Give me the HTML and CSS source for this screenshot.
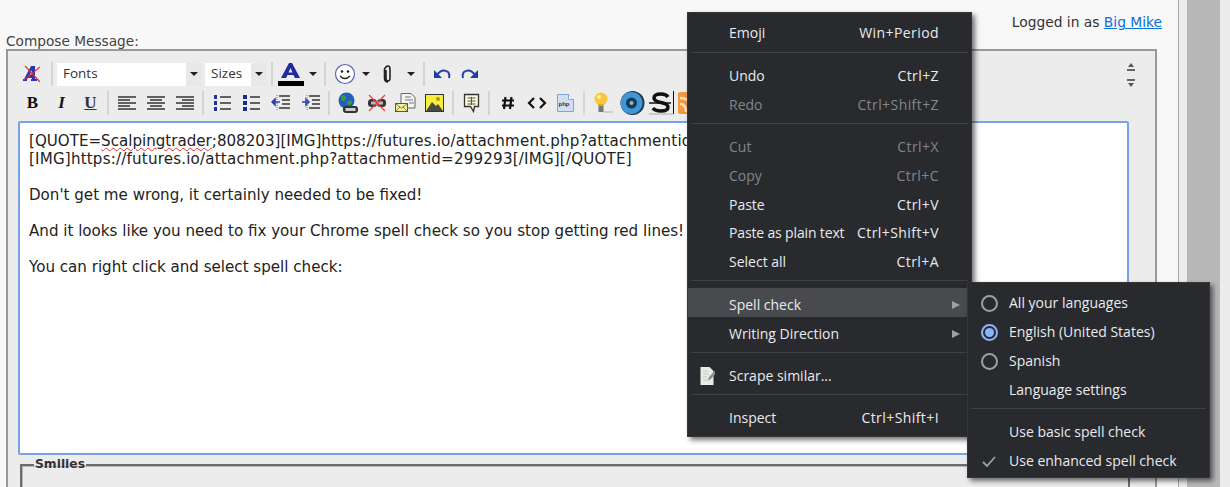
FILE: index.html
```html
<!DOCTYPE html>
<html lang="en">
<head>
<meta charset="utf-8">
<title>Compose Message</title>
<link rel="stylesheet" href="styles.css">
</head>
<body>
<div class="window">
  <main class="page">
    <div class="logged">Logged in as <a href="#">Big Mike</a></div>
    <label class="compose-label">Compose Message:</label>
    <section class="editor">
      <div class="tool-area">
        <div class="toolbars">
          <div class="tb-row tb-row-top">
            <span class="btn btn-first"><svg width="20" height="20" viewBox="0 0 20 20"><path d="M1 17 9 2h4v15h-3v-3H6l-2 3z M7.500 11H10V6z" fill="#2a35b0" fill-rule="evenodd"/><path d="M1 16h4M9 16h6" stroke="#2a35b0" stroke-width="2"/><path d="M3 2 18 18M18 3 2 16" stroke="#e0303a" stroke-width="1.100"/></svg></span>
            <i class="sep sep-first"></i>
            <span class="select select-font"><span class="select-text">Fonts</span><span class="select-arrow"><b class="caret"></b></span></span>
            <span class="select select-size"><span class="select-text">Sizes</span><span class="select-arrow"><b class="caret"></b></span></span>
            <i class="sep sep-color"></i>
            <span class="color-btn"><svg width="26" height="18" viewBox="0 0 26 18"><path d="M3 16 11 1h3l8 15h-5l-1.500-3h-6L8 16z M10.500 10.500h4L12.500 6z" fill="#1f2a9c" fill-rule="evenodd"/></svg><b class="color-bar"></b></span>
            <b class="caret caret-color"></b>
            <i class="sep sep-a"></i>
            <span class="btn btn-smile"><svg width="22" height="22" viewBox="0 0 22 22"><circle cx="11" cy="11" r="9.500" fill="#fff" stroke="#5a64b8" stroke-width="1.200"/><circle cx="8" cy="8.500" r="1.300" fill="#222"/><circle cx="14" cy="8.500" r="1.300" fill="#222"/><path d="M6 13q5 5 10 0" fill="none" stroke="#222" stroke-width="1.300"/></svg></span>
            <b class="caret caret-smile"></b>
            <span class="btn btn-clip"><svg width="10" height="18" viewBox="0 0 10 18"><path d="M3 5v8q0 3 2 3t2-3V4Q7 1 5 1T1.500 4v9q0 4 3.500 4" fill="none" stroke="#222" stroke-width="1.600"/></svg></span>
            <b class="caret caret-clip"></b>
            <i class="sep sep-b"></i>
            <span class="btn btn-undo"><svg width="17" height="13" viewBox="0 0 17 13"><path d="M3 7Q8 0 14 4q2 2 1 6" fill="none" stroke="#1f3fa8" stroke-width="2"/><path d="M0 2v8h8z" fill="#1f3fa8"/></svg></span>
            <span class="btn btn-redo"><svg width="17" height="13" viewBox="0 0 17 13"><path d="M14 7Q9 0 3 4q-2 2-1 6" fill="none" stroke="#1f3fa8" stroke-width="2"/><path d="M17 2v8H9z" fill="#1f3fa8"/></svg></span>
          </div>
          <div class="tb-row tb-row-bottom">
            <span class="btn fmt fmt-b">B</span>
            <span class="btn fmt fmt-i">I</span>
            <span class="btn fmt fmt-u">U</span>
            <i class="sep sep-short"></i>
            <span class="btn"><svg width="18" height="14" viewBox="0 0 18 14"><path d="M0 1h18M0 4h12M0 7h18M0 10h12M0 13h18" stroke="#333" stroke-width="1.400"/></svg></span>
            <span class="btn"><svg width="18" height="14" viewBox="0 0 18 14"><path d="M0 1h18M3 4h12M0 7h18M3 10h12M0 13h18" stroke="#333" stroke-width="1.400"/></svg></span>
            <span class="btn"><svg width="18" height="14" viewBox="0 0 18 14"><path d="M0 1h18M6 4h12M0 7h18M6 10h12M0 13h18" stroke="#333" stroke-width="1.400"/></svg></span>
            <i class="sep"></i>
            <span class="btn"><svg width="18" height="18" viewBox="0 0 18 18"><path d="M1 1h3v4H1zM1 7h3v4H1zM1 13h3v4H1z" fill="#2430a0"/><path d="M7 3h11M7 9h11M7 15h11" stroke="#333" stroke-width="1.500"/></svg></span>
            <span class="btn"><svg width="18" height="18" viewBox="0 0 18 18"><path d="M1 1h4v4H1zM1 7h4v4H1zM1 13h4v4H1z" fill="#1a2a94"/><path d="M8 3h10M8 9h10M8 15h10" stroke="#333" stroke-width="1.500"/></svg></span>
            <span class="btn btn-nudge"><svg width="20" height="18" viewBox="0 0 20 18"><path d="M8 2h11M11 6h8M11 10h8M8 14h11" stroke="#333" stroke-width="1.500"/><path d="M1 8h8M1 8l3-3v6z" stroke="#2a3fb0" stroke-width="1.500" fill="#2a3fb0"/><path d="M6 16V1" stroke="#777" stroke-width="1" stroke-dasharray="1 1"/></svg></span>
            <span class="btn btn-nudge"><svg width="20" height="18" viewBox="0 0 20 18"><path d="M8 2h11M11 6h8M11 10h8M8 14h11" stroke="#333" stroke-width="1.500"/><path d="M1 8h7M8 8 5 5v6z" stroke="#2a3fb0" stroke-width="1.500" fill="#2a3fb0"/><path d="M6 16V1" stroke="#777" stroke-width="1" stroke-dasharray="1 1"/></svg></span>
            <i class="sep"></i>
            <span class="btn"><svg width="22" height="22" viewBox="0 0 22 22"><circle cx="9.500" cy="8.500" r="8" fill="#1f5fc0"/><path d="M4 4q4-2 5 1t-3 4q-2 0-2-5zM10 10l4-2 1 3-3 3z" fill="#3f9a3c"/><rect x="6" y="14" width="15" height="7" rx="3" fill="#333"/><rect x="8.500" y="16" width="10" height="3" fill="#cfcfcf"/></svg></span>
            <span class="btn"><svg width="20" height="18" viewBox="0 0 20 18"><rect x="1" y="5" width="9" height="8" rx="3.500" fill="#333"/><rect x="10" y="5" width="9" height="8" rx="3.500" fill="#333"/><rect x="4" y="7.500" width="12" height="3" fill="#b9b9b9"/><path d="M2 1l16 16M18 1 2 17" stroke="#ec3c3c" stroke-width="1.200"/></svg></span>
            <span class="btn"><svg width="21" height="20" viewBox="0 0 21 20"><path d="M6 .5h10l4 4V15H6z" fill="#f4f4f4" stroke="#666"/><path d="M10 4h6M10 7h8M14 10h5" stroke="#777"/><rect x=".5" y="10.500" width="12" height="8" fill="#f6ef9c" stroke="#555"/><path d="M1 11l5.500 4 5.500-4M1 18l4-4M12 18l-4-4" fill="none" stroke="#7a8a3a"/></svg></span>
            <span class="btn"><svg width="19" height="18" viewBox="0 0 19 18"><rect x=".5" y=".5" width="18" height="17" fill="#f6ee3a" stroke="#333"/><circle cx="13" cy="5" r="2" fill="#a89a2a"/><path d="M1 17 7 8l4 4 2-2 5 7z" fill="#4a4a44"/></svg></span>
            <i class="sep"></i>
            <span class="btn"><svg width="17" height="20" viewBox="0 0 17 20"><path d="M1.500 1.500h14v12h-4l-1 5-3-5h-6z" fill="#fbfbd8" stroke="#333" stroke-width="1.300"/><path d="M4.500 5h8M4.500 8h8M4.500 11h8M8.500 4v8" stroke="#555"/></svg></span>
            <i class="sep sep-short"></i>
            <span class="btn"><svg width="14" height="14" viewBox="0 0 14 14"><path d="M4.500 1 3 13M10.500 1 9 13M1 4.500h12M1 9.500h12" stroke="#111" stroke-width="2.200"/></svg></span>
            <span class="btn"><svg width="20" height="12" viewBox="0 0 20 12"><path d="M7 1 2 6l5 5M13 1l5 5-5 5" fill="none" stroke="#111" stroke-width="2.200"/></svg></span>
            <span class="btn"><svg width="17" height="18" viewBox="0 0 17 18"><path d="M.5.500h11l5 5v12H.5z" fill="#cfe0f5" stroke="#7ea6d6"/><path d="M11.500.5v5h5" fill="#fff" stroke="#7ea6d6"/><text x="1.500" y="11.500" class="php">php</text></svg></span>
            <i class="sep"></i>
            <span class="btn"><svg width="22" height="22" viewBox="0 0 22 22"><circle cx="9" cy="7" r="6.500" fill="#f8c83a"/><circle cx="7" cy="5" r="2" fill="#fdeea0"/><path d="M6 12h6v2H6z" fill="#e5a91f"/><rect x="6.500" y="14" width="5" height="6" fill="#777"/><path d="M12 20h9" stroke="#cfcfcf" stroke-width="2"/></svg></span>
            <span class="btn"><svg width="26" height="26" viewBox="0 0 26 26"><circle cx="13.500" cy="13" r="12" fill="#24344a"/><circle cx="12.500" cy="13" r="11" fill="#3f97d8"/><circle cx="12.500" cy="13" r="5.500" fill="#163a5a"/><circle cx="12.500" cy="13" r="2" fill="#8fb9cc"/></svg></span>
            <span class="btn"><svg width="26" height="24" viewBox="0 0 26 24"><path d="M20 6q-2-3-7-3-7 0-7 4 0 3 7 4.500t7 4.500q0 4-7 4-6 0-8-3" fill="none" stroke="#111" stroke-width="3.500"/><path d="M1 12h22" stroke="#111" stroke-width="1.500"/><path d="M1 23h24" stroke="#aaa"/><path d="M25.500 0v23" stroke="#111"/></svg></span>
            <span class="btn btn-rss"><svg width="20" height="22" viewBox="0 0 20 22"><rect width="20" height="22" rx="2" fill="#f39a3c"/><path d="M2 6q12 0 12 14M2 12q6 0 6 8" fill="none" stroke="#fde3c4" stroke-width="2.500"/></svg></span>
          </div>
        </div>
        <div class="resize">
          <svg width="8" height="9" viewBox="0 0 8 9"><path d="M4 0 7 4H1z" fill="#555"/><path d="M0 6h8v2H0z" fill="#666"/></svg>
          <svg width="8" height="9" viewBox="0 0 8 9"><path d="M0 1h8v2H0z" fill="#666"/><path d="M1 5h6L4 9z" fill="#555"/></svg>
        </div>
      </div>
      <div class="textbox">
        <p class="line">[QUOTE=<span class="misspelt">Scalpingtrader</span>;808203][IMG]<span class="url">https://futures.io/attachment.php?attachmentid=299292[/IMG]</span></p>
        <p class="line para url">[IMG]https://futures.io/attachment.php?attachmentid=299293[/IMG][/QUOTE]</p>
        <p class="line para">Don't get me wrong, it certainly needed to be fixed!</p>
        <p class="line para">And it looks like you need to fix your Chrome spell check so you stop getting red lines!</p>
        <p class="line">You can right click and select spell check:</p>
      </div>
      <fieldset class="smilies"><legend>Smilies</legend></fieldset>
    </section>
  </main>
  <div class="gutter"><div class="gutter-bar"></div></div>

  <nav class="menu menu-main">
    <div class="mi mi-lead"><span>Emoji</span><span class="short">Win+Period</span></div>
    <hr class="msep">
    <div class="mi"><span>Undo</span><span class="short">Ctrl+Z</span></div>
    <div class="mi off"><span>Redo</span><span class="short">Ctrl+Shift+Z</span></div>
    <hr class="msep">
    <div class="mi off"><span>Cut</span><span class="short">Ctrl+X</span></div>
    <div class="mi off"><span>Copy</span><span class="short">Ctrl+C</span></div>
    <div class="mi mi-tight"><span>Paste</span><span class="short">Ctrl+V</span></div>
    <div class="mi"><span class="plain">Paste as plain text</span><span class="short">Ctrl+Shift+V</span></div>
    <div class="mi"><span>Select all</span><span class="short">Ctrl+A</span></div>
    <hr class="msep msep-wide">
    <div class="mi hot"><span>Spell check</span><b class="tri"></b></div>
    <div class="mi"><span>Writing Direction</span><b class="tri"></b></div>
    <hr class="msep">
    <div class="mi"><svg class="mi-icon" width="15" height="20" viewBox="0 0 15 20"><path d="M.5 1h9l4 4v14H.5z" fill="#e6ece6"/><path d="M3 5h5M3 8h6M3 11h4M3 14h7" stroke="#c2cac2"/><path d="M14.500 5 9 11l-1 3 3-1 5-6z" fill="#8a8f8a"/></svg><span>Scrape similar...</span></div>
    <hr class="msep">
    <div class="mi"><span>Inspect</span><span class="short">Ctrl+Shift+I</span></div>
  </nav>

  <nav class="menu menu-sub">
    <div class="mi"><i class="radio"></i><span>All your languages</span></div>
    <div class="mi"><i class="radio on"></i><span>English (United States)</span></div>
    <div class="mi"><i class="radio"></i><span>Spanish</span></div>
    <div class="mi"><span>Language settings</span></div>
    <hr class="msep">
    <div class="mi"><span>Use basic spell check</span></div>
    <div class="mi"><svg class="mi-check" width="14" height="11" viewBox="0 0 14 11"><path d="M1 6l4 4 8-9" fill="none" stroke="#9aa0a6" stroke-width="1.800"/></svg><span>Use enhanced spell check</span></div>
  </nav>
</div>
</body>
</html>
```
FILE: styles.css
```css
* { box-sizing: border-box; }
html, body { margin: 0; height: 100%; }
body { overflow: hidden; background: #f8f8f8; font-family: "DejaVu Sans", Verdana, sans-serif; color: #333; }
.window { position: relative; display: flex; width: 1230px; height: 487px; overflow: hidden; }

.page { width: 1179px; height: 487px; flex: none; padding: 13px 16px 0 6px; border-right: 1px solid #a8a8a8; background: #f8f8f8; }
.gutter { flex: 1; background: #ececec; padding-left: 8px; }
.gutter-bar { width: 33px; height: 100%; background: #b8b8b8; }

.logged { text-align: right; font-size: 13.800px; line-height: 18px; color: #333; }
.logged a { color: #0b6fd8; }
.compose-label { display: block; margin-top: 2px; font-size: 13.700px; line-height: 16px; color: #444; }

.editor { width: 1151px; height: 480px; margin: 0; border: 2px solid #999; background: #ececec; padding: 11px 0 0 10px; }
.tool-area { display: flex; padding-right: 16px; height: 59px; }
.toolbars { flex: 1; min-width: 0; }
.tb-row { display: flex; align-items: center; }
.tb-row-top { height: 24px; }
.tb-row-bottom { height: 24px; margin-top: 5px; }

.btn { flex: none; width: 29px; height: 24px; display: flex; align-items: center; justify-content: center; }
.btn-first { width: 28px; }
.btn-smile { width: 24px; margin-left: 7px; }
.btn-clip { width: 22px; margin-left: 7px; }
.btn-undo { width: 27px; margin-left: 4px; }
.btn-redo { width: 27px; }
.btn-nudge { margin-left: 1px; }
.btn-rss { justify-content: flex-start; margin-left: 3px; }

.sep { flex: none; width: 2px; height: 24px; margin: 0 3px; background: #d4d4d0; }
.sep-short { margin: 0 3px 0 2px; }
.sep-first { margin: 0 4px 0 5px; }
.sep-color { margin: 0 5px 0 4px; }
.sep-a { margin: 0 0 0 7px; }
.sep-b { margin: 0 0 0 8px; }

.select { flex: none; display: flex; height: 23px; background: #fff; margin-right: 3px; }
.select-font { width: 145px; }
.select-size { width: 62px; margin-right: 0; }
.select-text { flex: 1; padding-left: 6px; font: 13.500px/20px "Open Sans", sans-serif; color: #333; }
.select-arrow { width: 16px; background: #e8e8e8; display: flex; align-items: center; justify-content: center; }
.caret { display: block; flex: none; width: 0; height: 0; border-left: 4px solid transparent; border-right: 4px solid transparent; border-top: 4px solid #222; }
.color-btn { flex: none; width: 26px; height: 24px; display: flex; flex-direction: column; align-items: center; }
.color-bar { display: block; width: 26px; height: 5px; background: #000; margin-top: 1px; }
.caret-color { margin-left: 5px; }
.caret-smile { margin-left: 5px; }
.caret-clip { margin-left: 8px; }

.fmt { font-family: "Liberation Serif", serif; font-weight: 700; font-size: 17px; color: #111; }
.fmt-i { font-style: italic; }
.fmt-u { text-decoration: underline; color: #333; }
.php { font: 700 6px "Liberation Sans", sans-serif; fill: #334; }

.resize { width: 16px; padding-top: 1px; display: flex; flex-direction: column; align-items: center; gap: 6px; height: 40px; }

.textbox { width: 1111px; height: 334px; border: 2px solid #7aa3e6; border-radius: 2px; background: #fff; padding: 9px 9px; font-size: 15.100px; line-height: 18px; color: #222; overflow: hidden; }
.line { margin: 0; white-space: nowrap; }
.para { margin-bottom: 18px; }
.url { letter-spacing: .19px; }
.misspelt { text-decoration: underline wavy #e03030 1px; text-underline-offset: 1px; }

.smilies { width: 1110px; height: 60px; margin: 2px 0 0 2px; padding: 0 0 0 12px; border: 2px solid #6c6c6c; box-shadow: inset 0 1px 0 #b5b5b5, inset 1px 0 0 #b5b5b5; }
.smilies legend { padding: 0 1px; font-size: 12.300px; line-height: 15px; font-weight: 700; color: #333; }

.menu { position: absolute; background: #292a2d; border: 1px solid #35363a; color: #e8eaed; font: 14px/24px "Open Sans", sans-serif; box-shadow: 3px 3px 5px rgba(0,0,0,.55); }
.menu-main { left: 687px; top: 12px; width: 285px; padding: 4px 0 6px; }
.menu-sub { left: 967px; top: 282px; width: 243px; padding: 3px 0 4px; }
.mi { position: relative; display: flex; justify-content: space-between; align-items: center; height: 29px; padding: 5px 32px 0 41px; white-space: nowrap; }
.mi-lead { padding-top: 3px; }
.mi-tight { height: 28px; }
.off { color: #80868b; }
.hot { background: #494a4d; }
.short { letter-spacing: .42px; }
.plain { letter-spacing: -.15px; }
.msep { height: 1px; margin: 6px 3px; border: 0; background: #404145; }
.msep-wide { margin-bottom: 7px; }
.tri { width: 0; height: 0; margin-right: -21px; border-top: 4.500px solid transparent; border-bottom: 4.500px solid transparent; border-left: 8px solid #9aa0a6; }
.mi-icon { position: absolute; left: 12px; top: 7px; }
.mi-check { position: absolute; left: 14px; top: 12px; }
.radio { position: absolute; left: 13px; top: 9px; width: 17px; height: 17px; border: 2px solid #9aa0a6; border-radius: 50%; background: #292a2d; }
.radio.on { border-color: #8ab4f8; }
.radio.on::after { content: ""; position: absolute; left: 2px; top: 2px; width: 9px; height: 9px; border-radius: 50%; background: #8ab4f8; }
```
